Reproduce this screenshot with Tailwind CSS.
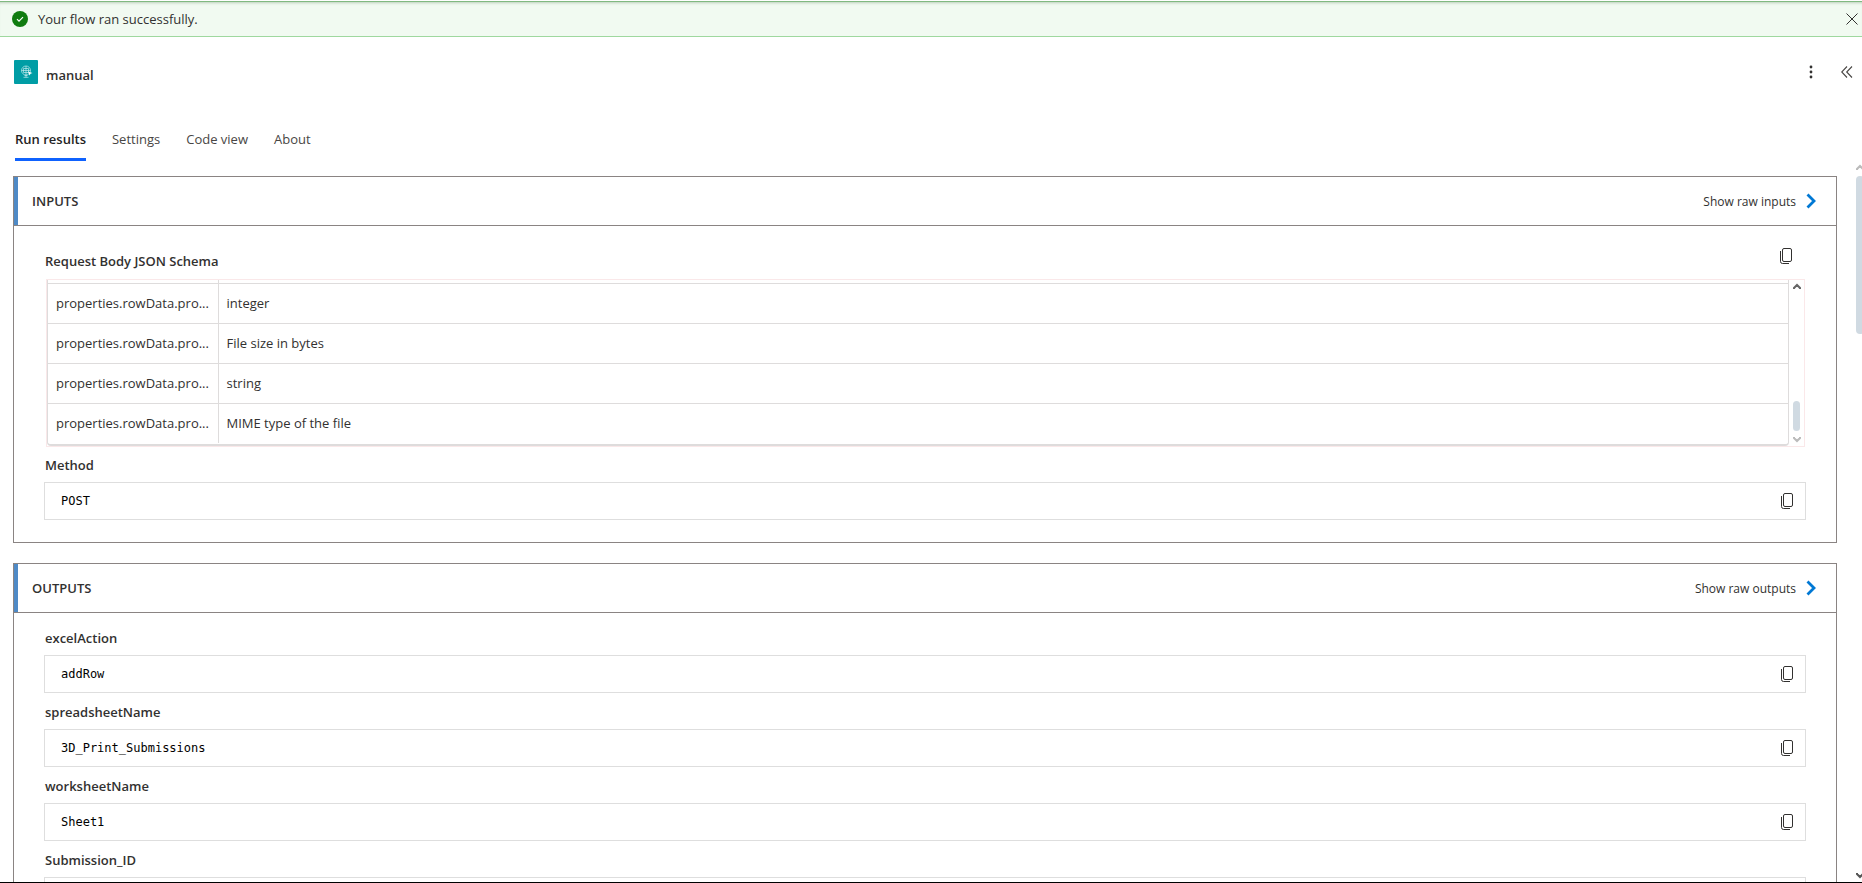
<!DOCTYPE html>
<html lang="en">
<head>
  <meta charset="UTF-8" />
  <meta name="viewport" content="width=device-width, initial-scale=1.0" />
  <title>Run results</title>
  <script src="https://cdn.jsdelivr.net/npm/@tailwindcss/browser@4"></script>
</head>
<body class="h-screen flex flex-col overflow-hidden bg-white border-b border-black text-[13px] leading-5 text-[#323130] font-['Open_Sans','Noto_Sans',sans-serif]">

  <svg class="hidden">
    <symbol id="copy" viewBox="0 0 14 18">
      <rect x="3.5" y="1.5" width="9" height="13" rx="1.5" fill="none" stroke="#323130" />
      <path d="M1.5 4v10.5a2 2 0 0 0 2 2H10" fill="none" stroke="#323130" />
    </symbol>
    <symbol id="chevron" viewBox="0 0 10 16">
      <path d="M1.5 1.5 8 8l-6.500 6.500" fill="none" stroke="#0078d4" stroke-width="2.800" />
    </symbol>
    <symbol id="arrow" viewBox="0 0 8 8">
      <path d="M1 6V5l3-3 3 3v1" fill="none" stroke="currentColor" stroke-width="2" />
    </symbol>
  </svg>

  <!-- Status banner -->
  <div role="status" class="mt-px h-9 shrink-0 flex items-center bg-[#f1faf1] border-t border-t-[#80b980] border-b border-b-[#9fd89f] pl-3 pr-1 shadow-[inset_0_3px_3px_-2px_#bcd0bc]">
    <svg class="size-4" viewBox="0 0 16 16">
      <circle cx="8" cy="8" r="8" fill="#107c10" />
      <path d="m5 8.200 2 2 4-4" fill="none" stroke="#fff" stroke-width="1.200" />
    </svg>
    <span class="ml-[10px]">Your flow ran successfully.</span>
    <button type="button" aria-label="Close" class="ml-auto">
      <svg class="size-3" viewBox="0 0 12 12"><path d="m.5.5 11 11m0-11-11 11" stroke="#323130" /></svg>
    </button>
  </div>

  <!-- Action header -->
  <header class="shrink-0 flex items-start pt-[23px] pl-[14px] pr-[9px]">
    <svg class="size-6" viewBox="0 0 24 24">
      <rect width="24" height="24" rx="1" fill="#009da5" />
      <g fill="none" stroke="#c4eaec" stroke-width=".7">
        <circle cx="12" cy="10.500" r="4.500" />
        <path d="M9.500 12.500v-4h5v4zM12 6v9M7.500 10.500h9M12 15v2.500M9.500 17.300h5M10.500 15.500h3" />
      </g>
      <path d="m14 11.500 4.500 1.500-2 .7-1 1.800z" fill="#fff" />
    </svg>
    <h1 class="ml-2 mt-[5px] font-semibold">manual</h1>
    <div class="ml-auto flex items-center gap-[22px] h-6">
      <button type="button" aria-label="More commands">
        <svg class="w-4 h-4" viewBox="0 0 16 16" fill="#323130"><circle cx="8" cy="3" r="1.400" /><circle cx="8" cy="8" r="1.400" /><circle cx="8" cy="13" r="1.400" /></svg>
      </button>
      <button type="button" aria-label="Collapse">
        <svg class="w-3 h-3" viewBox="0 0 12 12"><path d="M6 .5.700 6 6 11.500M11 .5 5.700 6l5.300 5.500" fill="none" stroke="#484644" stroke-width="1.100" /></svg>
      </button>
    </div>
  </header>

  <nav class="shrink-0 flex gap-[26px] pl-[15px] mt-11 text-[#484644]">
    <a href="#" class="h-8 border-b-3 border-[#0f62fe] font-semibold text-[#242424]">Run results</a>
    <a href="#">Settings</a>
    <a href="#">Code view</a>
    <a href="#">About</a>
  </nav>

  <div class="flex-1 min-h-0 flex mt-[2px]">
    <main class="flex-1 min-w-0 overflow-hidden pt-[13px] pl-[13px] pr-[19px]">

      <section class="border border-[#8a8483] pb-[22px]">
        <div class="h-[49px] flex items-center border-b border-[#8a8483] bg-[linear-gradient(to_right,#4f8ac6_4px,transparent_4px)] pl-[18px] pr-5">
          <h2 class="font-semibold">INPUTS</h2>
          <button type="button" class="ml-auto flex items-center gap-[10px] text-xs"><span class="pt-[2px]">Show raw inputs</span>
            <svg class="w-[10px] h-4"><use href="#chevron" /></svg>
          </button>
        </div>

        <div class="px-[30px]">
          <div class="flex items-start pt-[21px] h-[53px] pl-px pr-[13px]">
            <h3 class="font-semibold mt-[4px]">Request Body JSON Schema</h3>
            <button type="button" aria-label="Copy" class="ml-auto"><svg class="w-[14px] h-[18px]"><use href="#copy" /></svg></button>
          </div>

          <div class="ml-[2px] mr-px h-[168px] flex border border-[#fae8e9]">
            <div class="flex-1 border-x border-[#dedcdc] h-[166px] border-b-2 rounded-b-sm">
              <table class="w-full table-fixed border-collapse">
                <colgroup><col class="w-[170px]" /><col /></colgroup>
                <tbody>
                  <tr class="h-[3px]"><td class="border-r border-[#dedcdc]"></td><td></td></tr>
                  <tr class="h-10 border-t border-[#dedcdc]"><td class="pl-2 whitespace-nowrap border-r border-[#dedcdc]">properties.rowData.pro...</td><td class="px-2">integer</td></tr>
                  <tr class="h-10 border-t border-[#dedcdc]"><td class="pl-2 whitespace-nowrap border-r border-[#dedcdc]">properties.rowData.pro...</td><td class="px-2">File size in bytes</td></tr>
                  <tr class="h-10 border-t border-[#dedcdc]"><td class="pl-2 whitespace-nowrap border-r border-[#dedcdc]">properties.rowData.pro...</td><td class="px-2">string</td></tr>
                  <tr class="h-10 border-t border-[#dedcdc]"><td class="pl-2 whitespace-nowrap border-r border-[#dedcdc]">properties.rowData.pro...</td><td class="px-2">MIME type of the file</td></tr>
                </tbody>
              </table>
            </div>
            <div class="w-[15px] flex flex-col items-center pt-[3px] pb-[3px]">
              <svg class="size-2 text-[#666]"><use href="#arrow" /></svg>
              <div class="mt-auto w-[7px] h-[30px] rounded-sm bg-[#d0dae2]"></div>
              <svg class="size-2 mt-1 rotate-180 text-[#bbb]"><use href="#arrow" /></svg>
            </div>
          </div>

          <label for="method" class="block pl-px pt-[8px] pb-[7px] font-semibold">Method</label>
          <div class="h-[38px] flex items-center border border-[#dedede] pl-4 pr-[11px]">
            <input id="method" readonly value="POST" class="flex-1 text-xs text-black font-['DejaVu_Sans_Mono',monospace]" />
            <button type="button" aria-label="Copy"><svg class="w-[14px] h-[18px]"><use href="#copy" /></svg></button>
          </div>
        </div>
      </section>

      <section class="mt-5 border border-[#8a8483] pb-[22px]">
        <div class="h-[49px] flex items-center border-b border-[#8a8483] bg-[linear-gradient(to_right,#4f8ac6_4px,transparent_4px)] pl-[18px] pr-5">
          <h2 class="font-semibold">OUTPUTS</h2>
          <button type="button" class="ml-auto flex items-center gap-[10px] text-xs"><span class="pt-[2px]">Show raw outputs</span>
            <svg class="w-[10px] h-4"><use href="#chevron" /></svg>
          </button>
        </div>

        <div class="px-[30px] pt-[6px]">
          <label for="excelAction" class="block pl-px pt-[9px] pb-[7px] font-semibold">excelAction</label>
          <div class="h-[38px] flex items-center border border-[#dedede] pl-4 pr-[11px]">
            <input id="excelAction" readonly value="addRow" class="flex-1 text-xs text-black font-['DejaVu_Sans_Mono',monospace]" />
            <button type="button" aria-label="Copy"><svg class="w-[14px] h-[18px]"><use href="#copy" /></svg></button>
          </div>

          <label for="spreadsheetName" class="block pl-px pt-[9px] pb-[7px] font-semibold">spreadsheetName</label>
          <div class="h-[38px] flex items-center border border-[#dedede] pl-4 pr-[11px]">
            <input id="spreadsheetName" readonly value="3D_Print_Submissions" class="flex-1 text-xs text-black font-['DejaVu_Sans_Mono',monospace]" />
            <button type="button" aria-label="Copy"><svg class="w-[14px] h-[18px]"><use href="#copy" /></svg></button>
          </div>

          <label for="worksheetName" class="block pl-px pt-[9px] pb-[7px] font-semibold">worksheetName</label>
          <div class="h-[38px] flex items-center border border-[#dedede] pl-4 pr-[11px]">
            <input id="worksheetName" readonly value="Sheet1" class="flex-1 text-xs text-black font-['DejaVu_Sans_Mono',monospace]" />
            <button type="button" aria-label="Copy"><svg class="w-[14px] h-[18px]"><use href="#copy" /></svg></button>
          </div>

          <label for="submissionId" class="block pl-px pt-[9px] pb-[7px] font-semibold">Submission_ID</label>
          <div class="h-[38px] flex items-center border border-[#dedede] pl-4 pr-[11px]">
            <input id="submissionId" readonly class="flex-1 text-xs text-black font-['DejaVu_Sans_Mono',monospace]" />
          </div>
        </div>
      </section>
    </main>

    <!-- Page scrollbar -->
    <div class="w-[6px] shrink-0 flex flex-col overflow-hidden pt-px pb-[3px]">
      <svg class="size-2 shrink-0 text-[#bbb]"><use href="#arrow" /></svg>
      <div class="mt-1 w-2 h-[158px] rounded-sm bg-[#d0dae2]"></div>
      <svg class="size-2 shrink-0 mt-auto rotate-180 text-[#555]"><use href="#arrow" /></svg>
    </div>
  </div>
</body>
</html>
